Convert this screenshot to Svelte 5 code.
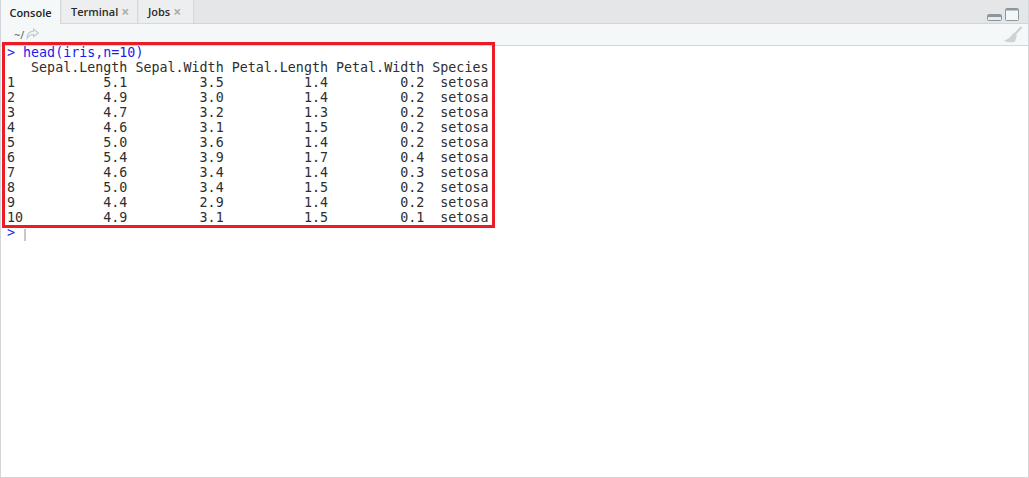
<script>
  const header = "   Sepal.Length Sepal.Width Petal.Length Petal.Width Species";
  const rows = [
    "1           5.1         3.5          1.4         0.2  setosa",
    "2           4.9         3.0          1.4         0.2  setosa",
    "3           4.7         3.2          1.3         0.2  setosa",
    "4           4.6         3.1          1.5         0.2  setosa",
    "5           5.0         3.6          1.4         0.2  setosa",
    "6           5.4         3.9          1.7         0.4  setosa",
    "7           4.6         3.4          1.4         0.3  setosa",
    "8           5.0         3.4          1.5         0.2  setosa",
    "9           4.4         2.9          1.4         0.2  setosa",
    "10          4.9         3.1          1.5         0.1  setosa"
  ];
  const output = [header, ...rows].join("\n");
</script>

<div class="pane">
  <div class="tabbar">
    <div class="tab active">Console</div>
    <div class="tab terminal">Terminal <span class="x">×</span></div>
    <div class="tab jobs">Jobs <span class="x">×</span></div>
    <div class="spacer"></div>
    <div class="winbtns">
      <svg width="15" height="7" viewBox="0 0 15 7"><rect x="0.5" y="0.5" width="14" height="6" rx="1" fill="#e8eaeb" stroke="#8a979f"/><rect x="1" y="1" width="13" height="2" fill="#8a979f"/></svg>
      <svg width="14" height="13" viewBox="0 0 14 13"><rect x="0.5" y="0.5" width="13" height="12" rx="1" fill="#f4f6f7" stroke="#8a979f"/><rect x="1" y="1" width="12" height="1.5" fill="#8a979f"/></svg>
    </div>
  </div>
  <div class="toolbar">
    <span class="path">~/</span>
    <svg class="arrow" width="13" height="12" viewBox="0 0 12 11"><path d="M7 1l4.500 3.500L7 8V6C4 6 2.500 7 1 9.500 1 6 3 3.200 7 3z" fill="#f2f5f6" stroke="#bcc6cb"/></svg>
    <div class="spacer"></div>
    <svg class="broom" width="20" height="18" viewBox="0 0 20 18"><path d="M18.500 1L12 8" stroke="#c9cfd2" stroke-width="2" fill="none"/><path d="M11 6.500l3 3-2 6-3.500 1-1-.5-1 .5-1-.7-1 .4L1 14.500c4-1 7-4 10-8z" fill="#cdd2d4"/></svg>
  </div>
  <div class="console">
    <div class="line"><span class="blue">&gt; head(iris,n=10)</span></div>
    <pre>{output}</pre>
    <div class="line prompt"><span class="blue">&gt;</span><span class="caret"></span></div>
    <div class="mark"></div>
  </div>
</div>

<style>
  :global(body) { margin: 0; background: #fff; }
  .pane {
    width: 1029px;
    height: 478px;
    box-sizing: border-box;
    border: 1px solid #d2d6d9;
    border-top: 0;
    display: flex;
    flex-direction: column;
    font-family: "Open Sans", sans-serif;
    overflow: hidden;
  }
  .tabbar {
    height: 24px;
    flex: none;
    display: flex;
    align-items: stretch;
    background: #e4e6e7;
    box-sizing: border-box;
    border-bottom: 1px solid #d2d6d9;
  }
  .tab {
    font-size: 11px;
    font-weight: 600;
    color: #2b2b2b;
    display: flex;
    align-items: center;
    gap: 3px;
    box-sizing: border-box;
    height: 24px;
    background: #eceeef;
    border: 1px solid #d5d9db;
    border-top: 0;
    border-left: 0;
    margin-right: 1px;
    padding: 0 0 1px 9px;
  }
  .terminal { width: 76px; }
  .jobs { width: 55px; }
  .tab.active {
    background: #f5f8f9;
    border-bottom: 0;
    width: 60px;
    justify-content: center;
    padding: 0;
    color: #222;
  }
  .x { color: #a9aeb2; font-size: 14px; font-weight: 700; }
  .spacer { flex: 1; }
  .winbtns {
    display: flex;
    align-items: flex-end;
    gap: 3px;
    padding: 0 9px 2px 0;
  }
  .toolbar {
    height: 22px;
    flex: none;
    display: flex;
    align-items: center;
    background: #f5f8f9;
    box-sizing: border-box;
    border-bottom: 1px solid #d2d6d9;
    padding-left: 13px;
  }
  .path { font-size: 11px; color: #555; margin-right: 2px; }
  .arrow { margin-top: -1px; }
  .broom { margin-right: 5px; margin-top: 1px; }
  .console {
    position: relative;
    flex: 1;
    margin-top: -1px;
    padding: 0 0 0 6px;
    font-family: "DejaVu Sans Mono", monospace;
    font-size: 13.340px;
    line-height: 15px;
    color: #2e2e2e;
  }
  .line { height: 15px; white-space: pre; }
  pre { margin: 0; font: inherit; }
  .blue { color: #1c1cf0; }
  .prompt { display: flex; }
  .caret { width: 2px; height: 12px; margin: 4px 0 0 9px; background: #c8c8c8; }
  .mark {
    position: absolute;
    left: 1px;
    top: -3px;
    width: 493px;
    height: 186px;
    box-sizing: border-box;
    border: 3px solid #ed1c24;
    pointer-events: none;
  }
</style>
